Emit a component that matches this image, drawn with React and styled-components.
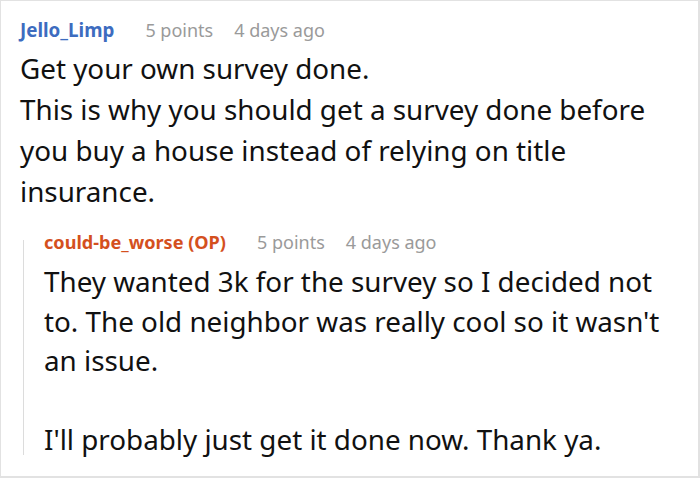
import styled, { createGlobalStyle } from "styled-components";

const Global = createGlobalStyle`
  html, body { margin: 0; padding: 0; background: #fff; }
  body { font-family: "Noto Sans", "Open Sans", sans-serif; }
`;

const Frame = styled.div`
  box-sizing: border-box;
  width: 700px;
  height: 478px;
  border: 2px solid #e2e2e2;
  border-top-width: 1px;
  border-left-width: 1px;
  padding: 14px 30px 0 19px;
  overflow: hidden;
`;

const Comment = styled.div`
  display: flex;
  flex-direction: column;
`;

const Meta = styled.div`
  display: flex;
  align-items: baseline;
  font-size: 18px;
  line-height: 30px;
  margin-bottom: ${({ $reply }) => ($reply ? "5px" : "3px")};
  color: #9a9a9a;
  white-space: nowrap;
`;

const Author = styled.span`
  font-weight: 700;
  font-size: ${({ $op }) => ($op ? "18.1px" : "18.8px")};
  color: ${({ $op }) => ($op ? "#d4501e" : "#3d6cbf")};
  margin-right: 31px;
`;

const Points = styled.span`
  margin-right: 21px;
`;

const Body = styled.div`
  font-size: 27.8px;
  line-height: ${({ $reply }) => ($reply ? "39.6px" : "41px")};
  color: #111;
  p { margin: 0; }
  p + p { margin-top: 39.6px; }
`;

const Reply = styled.div`
  position: relative;
  margin: 15px 0 0 3px;
  padding: 0 0 0 21px;
  display: flex;
  flex-direction: column;
  &::before {
    content: "";
    position: absolute;
    left: 0;
    top: 13px;
    bottom: 5px;
    width: 1px;
    background: #dcdcdc;
  }
`;

export default function App() {
  return (
    <>
      <Global />
      <Frame>
        <Comment>
          <Meta>
            <Author>Jello_Limp</Author>
            <Points>5 points</Points>
            <span>4 days ago</span>
          </Meta>
          <Body>
            <p>
              Get your own survey done.
              <br />
              This is why you should get a survey done before you buy a house instead of relying on title insurance.
            </p>
          </Body>
          <Reply>
            <Meta $reply>
              <Author $op>could-be_worse (OP)</Author>
              <Points>5 points</Points>
              <span>4 days ago</span>
            </Meta>
            <Body $reply>
              <p>
                They wanted 3k for the survey so I decided not to. The old neighbor was really cool so it wasn't an issue.
              </p>
              <p>I'll probably just get it done now. Thank ya.</p>
            </Body>
          </Reply>
        </Comment>
      </Frame>
    </>
  );
}
